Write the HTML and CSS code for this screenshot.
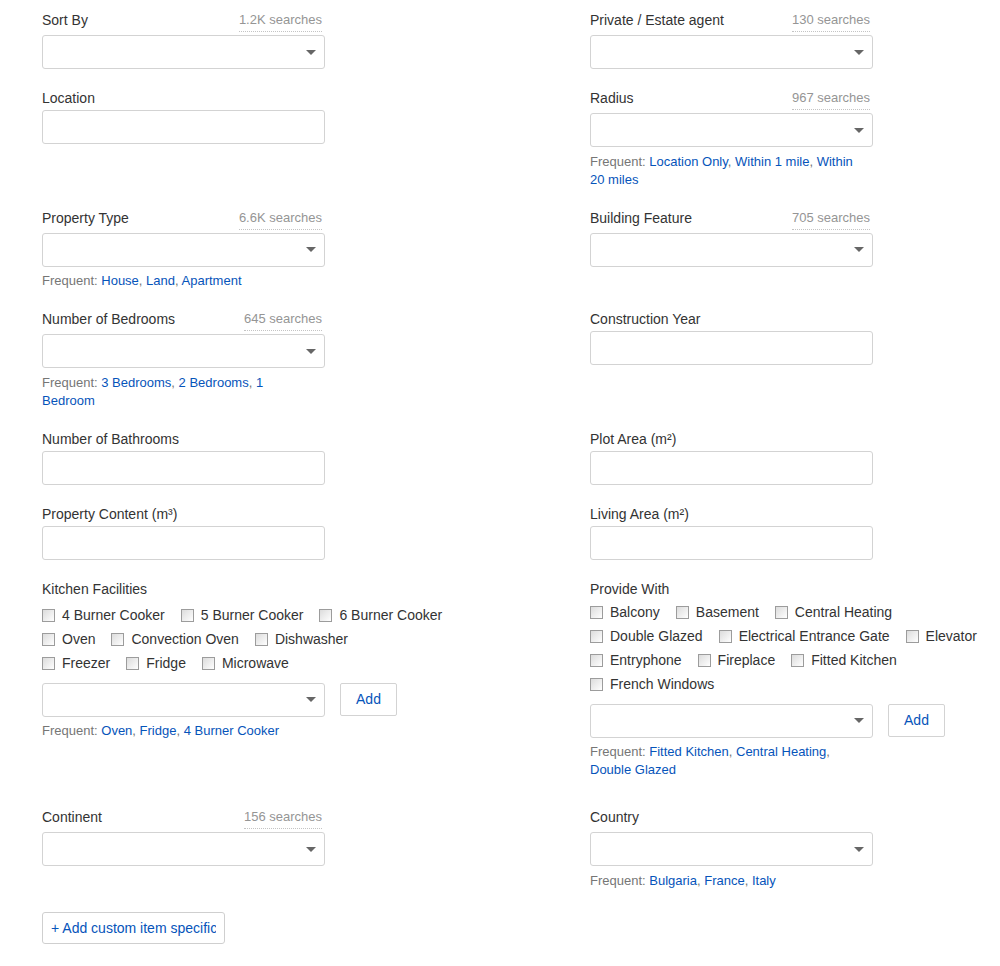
FILE: index.html
```html
<!DOCTYPE html>
<html lang="en">
<head>
<meta charset="utf-8">
<title>Item specifics</title>
<link rel="stylesheet" href="styles.css">
</head>
<body>
<div class="form">
  <div class="row">
    <div class="field">
      <div class="label-row"><span class="label">Sort By</span><span class="searches">1.2K searches</span></div>
      <div class="select"><span class="caret"></span></div>
    </div>
    <div class="field">
      <div class="label-row"><span class="label">Private / Estate agent</span><span class="searches">130 searches</span></div>
      <div class="select"><span class="caret"></span></div>
    </div>
  </div>

  <div class="row">
    <div class="field">
      <div class="label-row"><span class="label">Location</span></div>
      <div class="input"></div>
    </div>
    <div class="field">
      <div class="label-row"><span class="label">Radius</span><span class="searches">967 searches</span></div>
      <div class="select"><span class="caret"></span></div>
      <div class="frequent">Frequent: <a>Location Only</a>, <a>Within 1 mile</a>, <a>Within 20 miles</a></div>
    </div>
  </div>

  <div class="row">
    <div class="field">
      <div class="label-row"><span class="label">Property Type</span><span class="searches">6.6K searches</span></div>
      <div class="select"><span class="caret"></span></div>
      <div class="frequent">Frequent: <a>House</a>, <a>Land</a>, <a>Apartment</a></div>
    </div>
    <div class="field">
      <div class="label-row"><span class="label">Building Feature</span><span class="searches">705 searches</span></div>
      <div class="select"><span class="caret"></span></div>
    </div>
  </div>

  <div class="row">
    <div class="field">
      <div class="label-row"><span class="label">Number of Bedrooms</span><span class="searches">645 searches</span></div>
      <div class="select"><span class="caret"></span></div>
      <div class="frequent">Frequent: <a>3 Bedrooms</a>, <a>2 Bedrooms</a>, <a>1 Bedroom</a></div>
    </div>
    <div class="field">
      <div class="label-row"><span class="label">Construction Year</span></div>
      <div class="input"></div>
    </div>
  </div>

  <div class="row">
    <div class="field">
      <div class="label-row"><span class="label">Number of Bathrooms</span></div>
      <div class="input"></div>
    </div>
    <div class="field">
      <div class="label-row"><span class="label">Plot Area (m²)</span></div>
      <div class="input"></div>
    </div>
  </div>

  <div class="row">
    <div class="field">
      <div class="label-row"><span class="label">Property Content (m³)</span></div>
      <div class="input"></div>
    </div>
    <div class="field">
      <div class="label-row"><span class="label">Living Area (m²)</span></div>
      <div class="input"></div>
    </div>
  </div>

  <div class="row row-multi">
    <div class="field">
      <div class="label-row"><span class="label">Kitchen Facilities</span></div>
      <div class="checks checks-kitchen">
        <div class="check-line"><label class="check"><span class="box"></span>4 Burner Cooker</label><label class="check"><span class="box"></span>5 Burner Cooker</label><label class="check"><span class="box"></span>6 Burner Cooker</label></div>
        <div class="check-line"><label class="check"><span class="box"></span>Oven</label><label class="check"><span class="box"></span>Convection Oven</label><label class="check"><span class="box"></span>Dishwasher</label></div>
        <div class="check-line"><label class="check"><span class="box"></span>Freezer</label><label class="check"><span class="box"></span>Fridge</label><label class="check"><span class="box"></span>Microwave</label></div>
      </div>
      <div class="add-line">
        <div class="select"><span class="caret"></span></div>
        <button class="add-btn">Add</button>
      </div>
      <div class="frequent">Frequent: <a>Oven</a>, <a>Fridge</a>, <a>4 Burner Cooker</a></div>
    </div>
    <div class="field">
      <div class="label-row"><span class="label">Provide With</span></div>
      <div class="checks checks-provide">
        <div class="check-line"><label class="check"><span class="box"></span>Balcony</label><label class="check"><span class="box"></span>Basement</label><label class="check"><span class="box"></span>Central Heating</label></div>
        <div class="check-line"><label class="check"><span class="box"></span>Double Glazed</label><label class="check"><span class="box"></span>Electrical Entrance Gate</label><label class="check"><span class="box"></span>Elevator</label></div>
        <div class="check-line"><label class="check"><span class="box"></span>Entryphone</label><label class="check"><span class="box"></span>Fireplace</label><label class="check"><span class="box"></span>Fitted Kitchen</label></div>
        <div class="check-line"><label class="check"><span class="box"></span>French Windows</label></div>
      </div>
      <div class="add-line">
        <div class="select"><span class="caret"></span></div>
        <button class="add-btn">Add</button>
      </div>
      <div class="frequent">Frequent: <a>Fitted Kitchen</a>, <a>Central Heating</a>, <a>Double Glazed</a></div>
    </div>
  </div>

  <div class="row">
    <div class="field">
      <div class="label-row"><span class="label">Continent</span><span class="searches">156 searches</span></div>
      <div class="select"><span class="caret"></span></div>
    </div>
    <div class="field">
      <div class="label-row tall"><span class="label">Country</span></div>
      <div class="select"><span class="caret"></span></div>
      <div class="frequent">Frequent: <a>Bulgaria</a>, <a>France</a>, <a>Italy</a></div>
    </div>
  </div>

  <button class="custom-btn"><span class="custom-text">+ Add custom item specific</span></button>
</div>
</body>
</html>
```

FILE: styles.css
```css
html, body {
  margin: 0;
  padding: 0;
  background: #ffffff;
}

body {
  font-family: "Liberation Sans", Arial, sans-serif;
  font-size: 14px;
  color: #333333;
}

.form {
  padding: 11px 0 0 42px;
}

.row {
  display: grid;
  grid-template-columns: 548px 1fr;
  margin-bottom: 20px;
}

.row-multi {
  margin-bottom: 29px;
}

.field {
  display: flex;
  flex-direction: column;
  align-items: flex-start;
}

.label-row {
  width: 283px;
  box-sizing: border-box;
  padding-right: 3px;
  display: flex;
  justify-content: space-between;
  align-items: flex-start;
  margin-bottom: 3px;
}

.label-row.tall {
  min-height: 21px;
}

.label {
  font-size: 14px;
  line-height: 18px;
  color: #333333;
}

.searches {
  font-size: 13px;
  line-height: 18px;
  color: #959595;
  padding-bottom: 2px;
  border-bottom: 1px dotted #c4c4c4;
}

.input,
.select {
  width: 283px;
  height: 34px;
  box-sizing: border-box;
  border: 1px solid #d3d3d3;
  border-radius: 3px;
  background: #ffffff;
}

.select {
  display: flex;
  align-items: center;
  justify-content: flex-end;
  padding-right: 8px;
}

.caret {
  width: 0;
  height: 0;
  border-left: 5px solid transparent;
  border-right: 5px solid transparent;
  border-top: 5px solid #666666;
}

.frequent {
  width: 270px;
  margin-top: 5px;
  padding-top: 0.5px;
  font-size: 13px;
  line-height: 18px;
  color: #767676;
}

.frequent a {
  color: #0654ba;
  text-decoration: none;
}

.checks {
  display: flex;
  flex-direction: column;
}

.checks-kitchen {
  margin-top: 2px;
}

.checks-provide {
  margin-top: -1px;
}

.check-line {
  display: flex;
  white-space: nowrap;
}

.check {
  display: flex;
  align-items: center;
  height: 24px;
  margin-right: 16px;
  font-size: 14px;
  color: #333333;
}

.box {
  width: 13px;
  height: 13px;
  box-sizing: border-box;
  border: 1px solid #9c9c9c;
  background: linear-gradient(135deg, #dcdcdc 0%, #f4f4f4 70%, #ffffff 100%);
  margin-right: 7px;
  margin-top: 1px;
}

.add-line {
  display: flex;
  align-items: flex-start;
  gap: 15px;
  margin-top: 8px;
}

.add-btn {
  width: 57px;
  height: 33px;
  box-sizing: border-box;
  border: 1px solid #d3d3d3;
  border-radius: 2px;
  background: #ffffff;
  font-family: "Liberation Sans", Arial, sans-serif;
  font-size: 14px;
  color: #0654ba;
  padding: 0;
}

.custom-btn {
  display: block;
  width: 183px;
  height: 32px;
  box-sizing: border-box;
  margin-top: 22px;
  padding: 0 8px;
  border: 1px solid #cfcfcf;
  border-radius: 3px;
  background: #ffffff;
  font-family: "Liberation Sans", Arial, sans-serif;
  font-size: 14px;
  color: #0654ba;
  text-align: left;
}

.custom-text {
  display: block;
  overflow: hidden;
  white-space: nowrap;
}
```
